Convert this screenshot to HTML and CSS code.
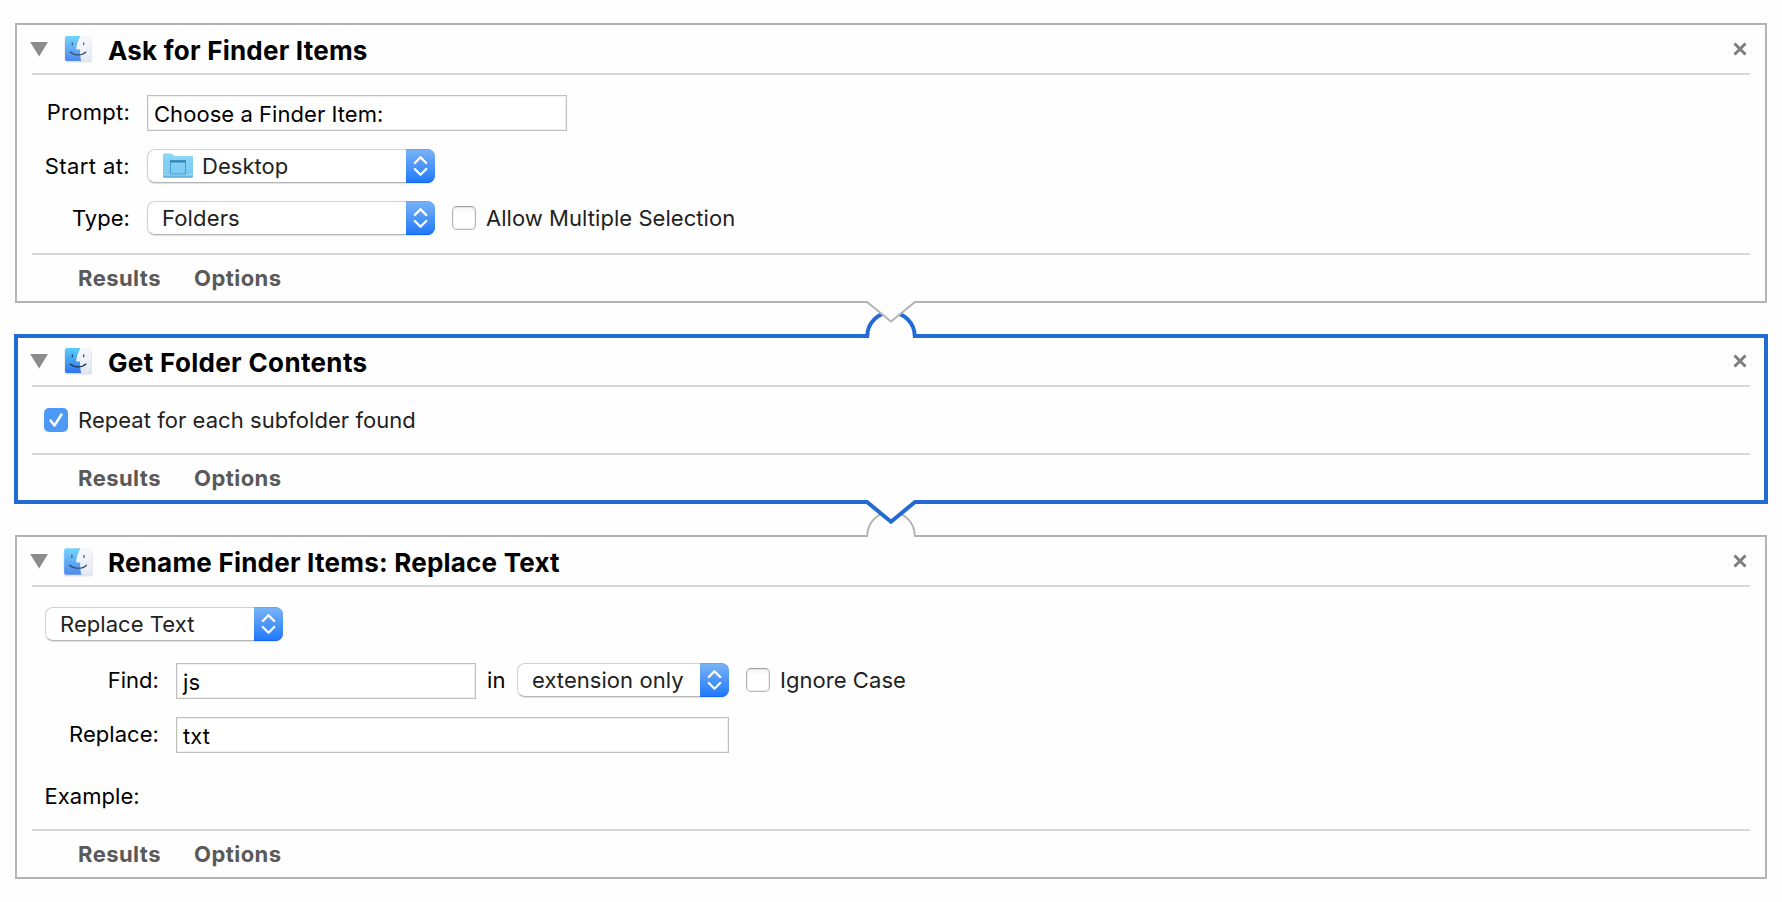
FILE: index.html
```html
<!DOCTYPE html>
<html lang="en">
<head>
<meta charset="utf-8">
<title>Workflow</title>
<link rel="stylesheet" href="styles.css">
</head>
<body>
<svg class="defs" width="0" height="0" aria-hidden="true">
  <defs>
    <linearGradient id="blue" x1="0" y1="0" x2="0" y2="1"><stop offset="0" stop-color="#5bcdfb"/><stop offset="1" stop-color="#2f74ee"/></linearGradient>
    <linearGradient id="pale" x1="0" y1="0" x2="0" y2="1"><stop offset="0" stop-color="#f8f8fa"/><stop offset="1" stop-color="#dfe8f3"/></linearGradient>
    <linearGradient id="folder" x1="0" y1="0" x2="0" y2="1"><stop offset="0" stop-color="#8dd6f8"/><stop offset="1" stop-color="#77c8f1"/></linearGradient>
    <symbol id="finder" viewBox="0 0 30 30">
      <rect x="1.500" y="2.500" width="27.500" height="26" rx="2.500" fill="#000" opacity=".13"/>
      <rect x="2" y="2" width="26.500" height="25" rx="2" fill="url(#pale)"/>
      <path d="M4 2H17.500C15 6.500 13.300 11 13.200 15.500H17C17 20 17.300 24 18.300 27H4A2 2 0 0 1 2 25V4A2 2 0 0 1 4 2Z" fill="url(#blue)"/>
      <path d="M9.300 8.800V10.800M20.700 8.800V10.800M7.300 18C11.500 21.800 19 21.800 23 18" fill="none" stroke="#17304a" stroke-width="1.100" stroke-linecap="round"/>
    </symbol>
    <symbol id="triangle" viewBox="0 0 18 15"><path d="M.2 0H18L9.100 14.600Z" fill="#8c8c8c"/></symbol>
    <symbol id="close" viewBox="0 0 14 14"><path d="M1.500 1.500L12.500 12.500M12.500 1.500L1.500 12.500" stroke="#7d7d7d" stroke-width="3"/></symbol>
    <symbol id="arrows" viewBox="0 0 29 34"><path d="M8.800 14L14.500 8.300L20.200 14M8.800 20L14.500 25.700L20.200 20" fill="none" stroke="#fff" stroke-width="2.300" stroke-linecap="round" stroke-linejoin="round"/></symbol>
  </defs>
</svg>

<main class="workflow">
  <section class="action">
    <header class="action-header">
      <svg class="disclosure"><use href="#triangle"/></svg>
      <svg class="app-icon dimmed"><use href="#finder"/></svg>
      <h2 class="title">Ask for Finder Items</h2>
      <svg class="close"><use href="#close"/></svg>
    </header>
    <div class="body ask">
      <div class="row"><span class="label prompt">Prompt:</span><div class="field prompt-field">Choose a Finder Item:</div></div>
      <div class="row"><span class="label start">Start at:</span>
        <div class="select wide"><span class="value"><svg class="folder" viewBox="0 0 30 26"><path d="M0 23.500V1.500Q0 .5 1 .5H8.500L11.500 3H29Q30 3 30 4V23.500Q30 24.500 29 24.500H1Q0 24.500 0 23.500Z" fill="url(#folder)"/><path d="M.5 24H29.500" stroke="#4b9fc6"/><path d="M1 21.500H29" stroke="#a5def8" stroke-width=".8"/><rect x="7.500" y="7.500" width="15" height="13.500" fill="none" stroke="#4a9fce"/><path d="M7 8.500H23" stroke="#3483b0" stroke-width="2"/></svg>Desktop</span><svg class="cap"><use href="#arrows"/></svg></div>
      </div>
      <div class="row"><span class="label">Type:</span>
        <div class="select wide"><span class="value folders">Folders</span><svg class="cap"><use href="#arrows"/></svg></div>
        <div class="check-item"><span class="checkbox"></span><span>Allow Multiple Selection</span></div>
      </div>
    </div>
    <footer class="action-footer"><span class="tab">Results</span><span class="tab">Options</span></footer>
  </section>

  <div class="connector">
    <svg class="joint" viewBox="861 296 60 50">
      <path d="M867.300 338V336A23.700 23.500 0 0 1 914.700 336V338" fill="#fefefe" stroke="#226ad4" stroke-width="4"/>
      <path d="M869.300 336H912.700V339H869.300Z" fill="#fefefe"/>
      <path d="M866.500 300V302L891 321.500L915.500 302V300Z" fill="#fefefe"/>
      <path d="M866 302H867L891 321.500L915 302H916" fill="none" stroke="#b3b3b3" stroke-width="2"/>
    </svg>
  </div>

  <section class="action selected">
    <header class="action-header">
      <svg class="disclosure"><use href="#triangle"/></svg>
      <svg class="app-icon"><use href="#finder"/></svg>
      <h2 class="title get">Get Folder Contents</h2>
      <svg class="close"><use href="#close"/></svg>
    </header>
    <div class="body contents">
      <div class="check-item"><span class="checkbox checked"><svg class="tick" viewBox="0 0 24 24"><path d="M6.500 12.500L10.500 17.500L17.500 6.500" fill="none" stroke="#fff" stroke-width="2.500" stroke-linecap="round" stroke-linejoin="round"/></svg></span><span class="repeat">Repeat for each subfolder found</span></div>
    </div>
    <footer class="action-footer"><span class="tab">Results</span><span class="tab">Options</span></footer>
  </section>

  <div class="connector">
    <svg class="joint" viewBox="861 496 60 50">
      <path d="M867.300 537V535.500A23.700 23.500 0 0 1 914.700 535.500V537" fill="#fefefe" stroke="#b3b3b3" stroke-width="2"/>
      <path d="M868.300 534H913.700V538H868.300Z" fill="#fefefe"/>
      <path d="M866.500 499V502L891 521.700L915.500 502V499Z" fill="#fefefe"/>
      <path d="M865 502H867L891 521.700L915 502H917" fill="none" stroke="#226ad4" stroke-width="4"/>
    </svg>
  </div>

  <section class="action">
    <header class="action-header">
      <svg class="disclosure"><use href="#triangle"/></svg>
      <svg class="app-icon dimmed large"><use href="#finder"/></svg>
      <h2 class="title">Rename Finder Items: Replace Text</h2>
      <svg class="close"><use href="#close"/></svg>
    </header>
    <div class="body rename">
      <div class="row mode"><div class="select mode-select"><span class="value">Replace Text</span><svg class="cap"><use href="#arrows"/></svg></div></div>
      <div class="row"><span class="label">Find:</span><div class="field find-field">js</div><span class="in">in</span>
        <div class="select scope-select"><span class="value">extension only</span><svg class="cap"><use href="#arrows"/></svg></div>
        <div class="check-item"><span class="checkbox"></span><span>Ignore Case</span></div>
      </div>
      <div class="row"><span class="label">Replace:</span><div class="field replace-field">txt</div></div>
      <div class="example">Example:</div>
    </div>
    <footer class="action-footer"><span class="tab">Results</span><span class="tab">Options</span></footer>
  </section>
</main>
</body>
</html>
```
FILE: styles.css
```css
* { box-sizing: border-box; }

body {
  margin: 0;
  background: #fefefe;
  color: #000;
  font: 400 22px/26px Inter, "Liberation Sans", sans-serif;
  letter-spacing: 0.05px;
  white-space: nowrap;
}

svg { display: block; flex: none; }
.defs { position: absolute; }

.workflow { padding: 23px 15px 0; }

.action {
  border: 2px solid #b3b3b3;
  padding: 0 15px;
  background: #fefefe;
}
.selected {
  border-color: #226ad4;
  box-shadow: 0 0 0 1px #226ad4, inset 0 0 0 1px #226ad4;
}

.action-header {
  display: flex;
  align-items: flex-start;
  height: 50px;
  border-bottom: 2px solid #d8d8d8;
}
.disclosure { width: 18px; height: 15px; margin: 17px 16px 0 -2px; }
.app-icon { width: 30px; height: 30px; margin: 9px 15px 0 -1px; }
.dimmed { opacity: 0.85; filter: blur(0.6px); }
.large { width: 32px; height: 32px; margin: 9px 14px 0 -2px; }
.title {
  margin: 1px 0 0;
  flex: 1;
  font-size: 26px;
  font-weight: 700;
  line-height: 49px;
  letter-spacing: 0.22px;
}
.get { letter-spacing: 0.34px; }
.close { width: 14px; height: 14px; margin: 17px 3px 0 0; }

.row { display: flex; align-items: flex-start; }
.label {
  flex: none;
  padding-right: 17px;
  text-align: right;
  line-height: 34px;
}
.prompt { letter-spacing: 0.25px; }
.start { letter-spacing: 0.4px; }

.ask { display: grid; row-gap: 18px; padding: 20px 0 18px; }
.ask .label { width: 115px; }

.field {
  height: 36px;
  padding: 1px 0 0 6px;
  border: 1px solid #bfbfbf;
  box-shadow: inset 0 0 0 1px #f0f0f0;
  background: #fff;
  line-height: 34px;
}
.prompt-field { width: 420px; }
.find-field { width: 300px; }
.replace-field { width: 553px; }

.select {
  display: flex;
  height: 34px;
  border-radius: 8px;
  background: #fff;
  box-shadow: 0 1px 1px rgba(0, 0, 0, 0.12);
  color: #222;
}
.value {
  display: flex;
  align-items: center;
  gap: 9px;
  flex: 1;
  padding-left: 14px;
  border: 1px solid #d2d2d2;
  border-bottom-color: #b5b5b5;
  border-right: 0;
  border-radius: 8px 0 0 8px;
}
.folders { letter-spacing: 0.15px; }
.cap {
  width: 29px;
  height: 34px;
  border-radius: 0 8px 8px 0;
  background: linear-gradient(#7ab4f7, #1f78fa);
  box-shadow: inset 0 1px #68a5ef, inset 0 -1px #1466f4;
}
.wide { width: 288px; }
.folder { width: 30px; height: 26px; margin-left: 1px; }
.mode-select { width: 238px; }
.scope-select { width: 212px; }

.check-item { display: flex; align-items: center; gap: 10px; color: #222; }
.row .check-item { height: 34px; margin-left: 17px; }
.checkbox {
  width: 24px;
  height: 24px;
  flex: none;
  border: 1px solid #b5b5b5;
  border-top-color: #a0a0a0;
  border-radius: 5px;
  background: linear-gradient(#f3f3f3, #fff 30%);
  box-shadow: inset 0 0 0 1px rgba(0, 0, 0, 0.06);
}
.checked { border: 0; background: #4e99f7; box-shadow: none; }
.tick { width: 24px; height: 24px; }

.contents { padding: 20px 0 20px 12px; }

.rename { padding: 20px 0; }
.rename .label { width: 144px; }
.mode { padding-left: 13px; margin-bottom: 22px; }
.rename .row + .row + .row { margin-top: 18px; }
.in { width: 30px; margin-left: 11px; line-height: 34px; }
.example { margin-top: 30px; padding-left: 12.500px; }

.action-footer {
  display: flex;
  height: 48px;
  padding: 10px 0 0 46px;
  border-top: 2px solid #d8d8d8;
  color: #595959;
  font-weight: 700;
  letter-spacing: 0.45px;
}
.tab { width: 116px; }

.connector { display: flex; justify-content: center; height: 32px; }
.joint { position: relative; z-index: 1; width: 60px; height: 50px; margin-top: -7px; }
```
